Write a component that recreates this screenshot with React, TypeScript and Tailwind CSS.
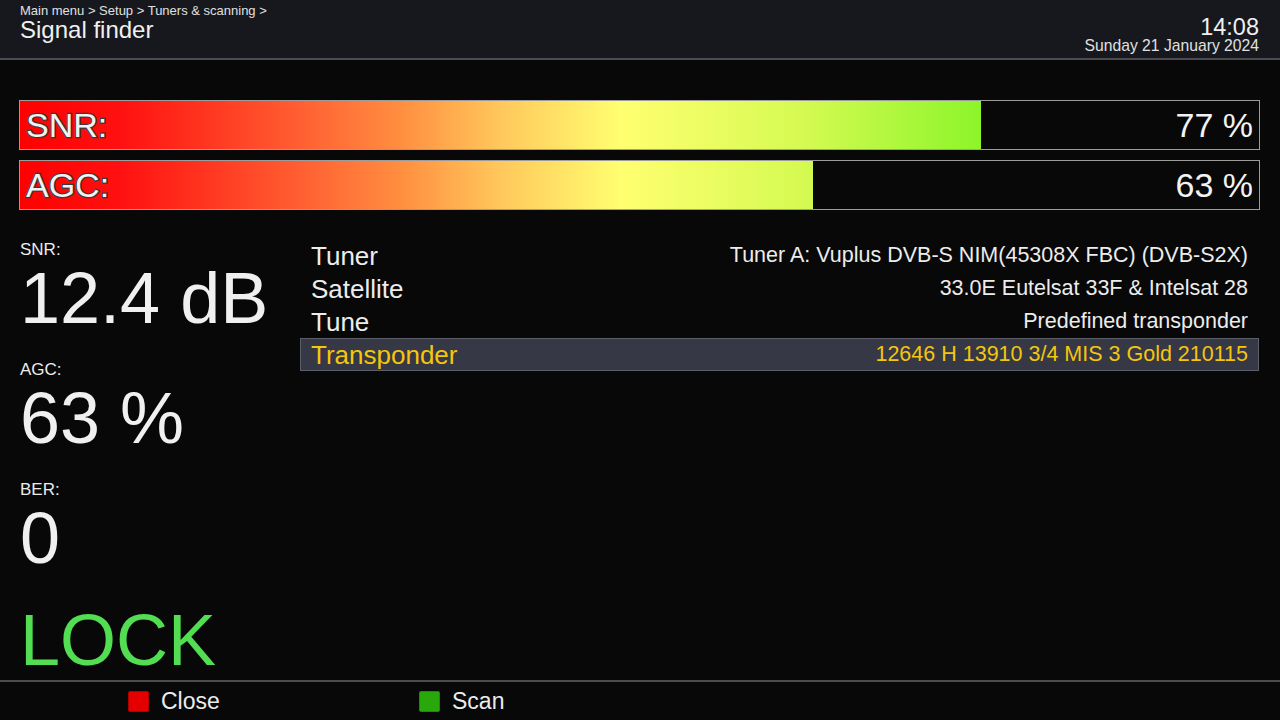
import React from "react";

const FONT = { fontFamily: '"Liberation Sans", Arial, sans-serif' };

function Bar({ label, value, fill }: { label: string; value: string; fill: number }) {
  return (
    <div className="relative h-[50px] w-[1241px] border border-[#9c9c9c] bg-[#080808]">
      <div className="absolute left-0 top-0 bottom-0 overflow-hidden" style={{ width: fill }}>
        <div className="h-full w-[1239px] bg-[linear-gradient(to_right,#ff0000_0%,#ff1010_8%,#ff5f32_22.6%,#ff8e40_30.7%,#ffc85c_38.8%,#ffff70_48.5%,#d6fa52_63%,#8cf52a_77.6%,#66ee14_100%)]" />
      </div>
      <div className="relative flex h-full items-center justify-between pl-[6px] pr-[6px] text-[34px] leading-none text-[#f2f2f2]">
        <span className="[-webkit-text-stroke:2.5px_#3a3a3a] [paint-order:stroke_fill]">{label}</span>
        <span>{value}</span>
      </div>
    </div>
  );
}

function Stat({ label, value }: { label: string; value: string }) {
  return (
    <div className="flex flex-col">
      <div className="text-[17px] leading-[20px] text-[#ececec]">{label}</div>
      <div className="mt-[3px] text-[72px] leading-[70px] text-[#f0f0f0]">{value}</div>
    </div>
  );
}

function Row({ label, value, selected }: { label: string; value: string; selected?: boolean }) {
  return (
    <div
      className={
        "flex h-[33px] items-center justify-between pl-[10px] pr-[10px] " +
        (selected ? "border border-[#5c5e68] bg-[#363845] text-[#f4c60c]" : "border border-transparent text-[#ececec]")
      }
    >
      <span className="text-[26px] leading-none">{label}</span>
      <span className="text-[21.5px] leading-none">{value}</span>
    </div>
  );
}

export default function App() {
  return (
    <div className="flex h-[720px] w-[1280px] flex-col overflow-hidden bg-[#080808]" style={FONT}>
      {/* Header */}
      <div className="flex h-[60px] shrink-0 justify-between border-b-2 border-[#4a4c52] bg-[#16181d] pl-[20px] pr-[21px]">
        <div className="flex flex-col pt-[3px]">
          <div className="text-[13px] leading-[16px] text-[#e0e0e0]">Main menu &gt; Setup &gt; Tuners &amp; scanning &gt;</div>
          <div className="text-[24px] leading-[22px] text-[#f0f0f0]">Signal finder</div>
        </div>
        <div className="flex flex-col items-end pt-[16px]">
          <div className="text-[23.5px] leading-[22px] text-[#f0f0f0]">14:08</div>
          <div className="text-[15.7px] leading-[16px] text-[#e0e0e0]">Sunday 21 January 2024</div>
        </div>
      </div>

      {/* Main */}
      <div className="flex flex-1 flex-col pt-[40px]">
        <div className="flex flex-col gap-[10px] pl-[19px]">
          <Bar label="SNR:" value="77 %" fill={961} />
          <Bar label="AGC:" value="63 %" fill={793} />
        </div>

        <div className="mt-[30px] flex">
          <div className="flex w-[300px] flex-col gap-[27px] pl-[20px]">
            <Stat label="SNR:" value="12.4 dB" />
            <Stat label="AGC:" value="63 %" />
            <Stat label="BER:" value="0" />
            <div className="mt-[5px] text-[72px] leading-[70px] text-[#52dd52]">LOCK</div>
          </div>
          <div className="mt-[-1px] flex w-[959px] flex-col">
            <Row label="Tuner" value="Tuner A: Vuplus DVB-S NIM(45308X FBC) (DVB-S2X)" />
            <Row label="Satellite" value={"33.0E Eutelsat 33F & Intelsat 28"} />
            <Row label="Tune" value="Predefined transponder" />
            <Row label="Transponder" value="12646 H 13910 3/4 MIS 3 Gold 210115" selected />
          </div>
        </div>
      </div>

      {/* Footer */}
      <div className="flex h-[40px] shrink-0 items-center border-t-2 border-[#4a4c52] bg-[#080808] pl-[128px]">
        <div className="flex w-[291px] items-center gap-[12px]">
          <div className="h-[21px] w-[21px] rounded-[2px] border border-[#b00000] bg-[#e40000]" />
          <span className="text-[23px] leading-none text-[#ececec]">Close</span>
        </div>
        <div className="flex items-center gap-[12px]">
          <div className="h-[21px] w-[21px] rounded-[2px] border border-[#1c8a06] bg-[#28a80a]" />
          <span className="text-[23px] leading-none text-[#ececec]">Scan</span>
        </div>
      </div>
    </div>
  );
}
